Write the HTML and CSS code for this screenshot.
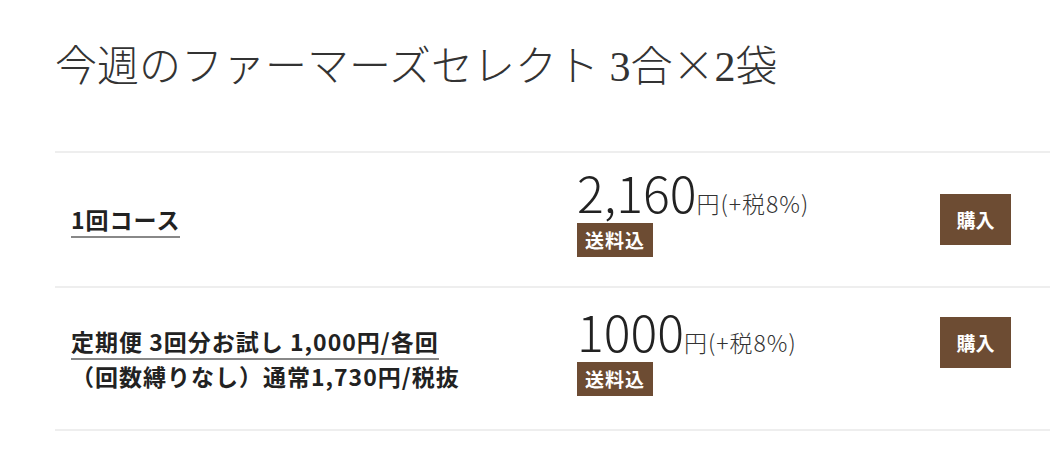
FILE: index.html
```html
<!DOCTYPE html>
<html lang="ja">
<head>
<meta charset="utf-8">
<link rel="stylesheet" href="styles.css">
</head>
<body>

<div class="wrap">

	<h1 class="title">今週のファーマーズセレクト 3合<span class="times">×</span>2袋</h1>

	<div class="courses">

		<div class="course">
			<div class="course-name">
				<span class="course-link">1回コース</span>
			</div>
			<div class="course-price">
				<div class="price">2,160<span class="unit">円(+税8%)</span></div>
				<span class="badge">送料込</span>
			</div>
			<div class="course-buy">
				<button type="button" class="buy">購入</button>
			</div>
		</div>

		<div class="course course-long">
			<div class="course-name">
				<span class="course-link">定期便 3回分お試し 1,000円/各回</span><br>
				（回数縛りなし）通常1,730円/税抜
			</div>
			<div class="course-price">
				<div class="price">1000<span class="unit">円(+税8%)</span></div>
				<span class="badge">送料込</span>
			</div>
			<div class="course-buy">
				<button type="button" class="buy">購入</button>
			</div>
		</div>

	</div>

</div>

</body>
</html>
```

FILE: styles.css
```css
body{
	margin:0;
	background-color:#fff;
	color:#333;
	font-family:"Noto Sans CJK JP", sans-serif;
}

.wrap{
	padding-left:55px;
}

.title{
	height:60px;
	margin:33px 0 58px;
	font-family:"Liberation Serif", "Noto Sans CJK JP", serif;
	font-size:42px;
	font-weight:300;
	line-height:60px;
	color:#333;
}
.title .times{
	font-family:"Noto Sans CJK JP", sans-serif;
	font-feature-settings:"fwid";
}

.courses{
	border-bottom:2px solid #eee;
}

.course{
	display:grid;
	grid-template-columns:506px 1fr auto;
	align-items:center;
	padding:13px 39px 13px 16px;
	border-top:2px solid #eee;
}
.course-long{
	padding-top:17px;
	padding-bottom:17px;
}

.course-name{
	font-size:23px;
	font-weight:bold;
	line-height:35px;
	letter-spacing:1px;
	color:#222;
}
.course-link{
	border-bottom:2px solid #888;
}

.course-price{
	display:flex;
	flex-direction:column;
	align-items:flex-start;
	margin-bottom:16px;
}
.price{
	height:50px;
	font-size:50px;
	font-weight:300;
	line-height:50px;
	color:#222;
}
.unit{
	font-size:23px;
	line-height:1;
	letter-spacing:1px;
	color:#333;
}
.badge{
	margin-top:7px;
	padding:0 8px;
	background-color:#6d4c33;
	color:#fff;
	font-size:19px;
	font-weight:bold;
	line-height:34px;
	letter-spacing:1px;
}

.buy{
	width:71px;
	height:51px;
	padding:0;
	border:none;
	background-color:#6d4c33;
	color:#fff;
	font-family:"Noto Sans CJK JP", sans-serif;
	font-size:19px;
	font-weight:bold;
	cursor:pointer;
}
.course-long .course-buy{
	align-self:start;
	margin-top:12px;
}
```
